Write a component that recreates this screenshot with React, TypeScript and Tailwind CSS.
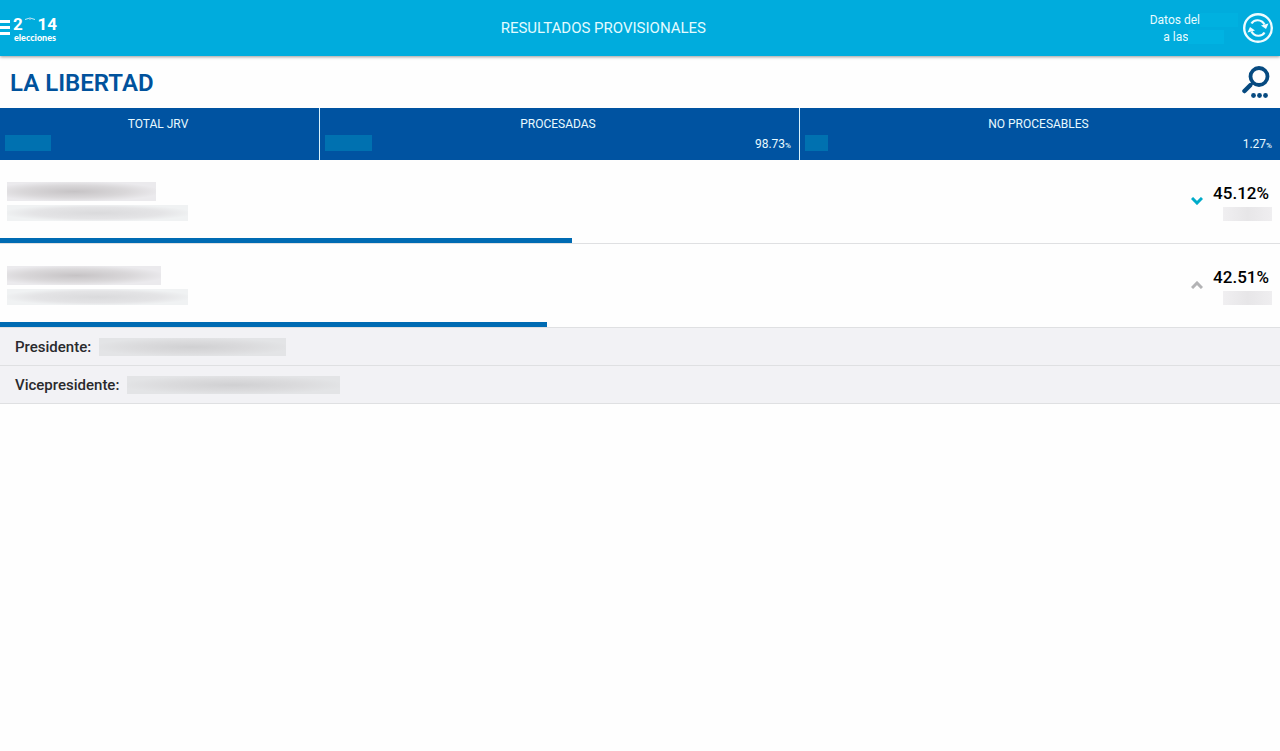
import { useState } from 'react';
import { clsx } from 'clsx';

interface Stat {
  label: string;
  blurWidth: string;
  percent?: string;
}

interface Candidate {
  label: string;
  blurWidth: string;
}

interface Party {
  id: string;
  percent: string;
  bar: number;
  nameBlur: string;
  detailBlur: string;
  candidates: Candidate[];
}

const STATS: Stat[] = [
  { label: 'TOTAL JRV', blurWidth: 'w-[46px]' },
  { label: 'PROCESADAS', blurWidth: 'w-[47px]', percent: '98.73' },
  { label: 'NO PROCESABLES', blurWidth: 'w-[23px]', percent: '1.27' },
];

const FORMULA: Candidate[] = [
  { label: 'Presidente:', blurWidth: 'w-[187px]' },
  { label: 'Vicepresidente:', blurWidth: 'w-[213px]' },
];

const PARTIES: Party[] = [
  { id: 'a', percent: '45.12', bar: 572 / 1280, nameBlur: 'w-[149px]', detailBlur: 'w-[181px]', candidates: FORMULA },
  { id: 'b', percent: '42.51', bar: 547 / 1280, nameBlur: 'w-[154px]', detailBlur: 'w-[181px]', candidates: FORMULA },
];

function Logo() {
  return (
    <div className="flex flex-col w-11 text-white">
      <div className="flex items-start justify-between font-bold text-[17px] leading-[18px]">
        <span>2</span>
        <svg viewBox="0 0 12 4" className="w-3 h-1 mt-[2px]" aria-hidden="true">
          <path d="M1 2.5 Q6 -0.5 11 2.5" fill="none" stroke="#c4ecf8" strokeWidth="1" />
          <path d="M4 1.5 h4 l-2 1.5 z" fill="#9fc4e6" />
        </svg>
        <span>14</span>
      </div>
      <span className="font-[Lato] font-black text-[9px] leading-[9px]">elecciones</span>
    </div>
  );
}

function MenuIcon() {
  return (
    <svg viewBox="0 0 10 16" className="w-[10px] h-4" fill="#fff" aria-hidden="true">
      <path d="M0 0h10v3H0zM0 6h10v3H0zM0 12h10v3H0z" />
    </svg>
  );
}

function RefreshIcon() {
  return (
    <svg viewBox="0 0 30 30" className="size-[30px]" fill="none" stroke="#eefcff" aria-hidden="true">
      <circle cx="15" cy="15" r="13.8" strokeWidth="2.4" />
      <path d="M8.5 10.5 C11 6 18.5 6 21.5 11.5" strokeWidth="2.2" />
      <path d="M21.5 19.5 C19 24 11.5 24 8.5 18.5" strokeWidth="2.2" />
      <path d="M18 12.5 L25.5 10.5 L23 16 Z" fill="#eefcff" stroke="none" />
      <path d="M12 17.5 L4.5 19.5 L7 14 Z" fill="#eefcff" stroke="none" />
    </svg>
  );
}

function SearchIcon() {
  return (
    <svg viewBox="0 0 28 34" className="w-7 h-[34px]" fill="none" stroke="#064a80" aria-hidden="true">
      <circle cx="17" cy="11.5" r="8.5" strokeWidth="3.8" />
      <path d="M11 17.5 L8 20.5" strokeWidth="3" />
      <path d="M8 20.5 L2.5 26" strokeWidth="4.5" strokeLinecap="round" />
      <g fill="#064a80" stroke="none">
        <circle cx="11.5" cy="30.5" r="2.4" />
        <circle cx="17.5" cy="30.5" r="2.4" />
        <circle cx="23.5" cy="30.5" r="2.4" />
      </g>
    </svg>
  );
}

function Chevron({ open }: { open: boolean }) {
  return (
    <svg viewBox="0 0 12 8" className="w-3 h-2" fill="none" strokeWidth="3" aria-hidden="true">
      {open ? (
        <path d="M1 7 L6 2 L11 7" stroke="#b3b3b5" />
      ) : (
        <path d="M1 1 L6 6 L11 1" stroke="#00abc9" />
      )}
    </svg>
  );
}

function PartyRow({ party, open, onToggle }: { party: Party; open: boolean; onToggle: () => void }) {
  return (
    <li>
      <button
        type="button"
        onClick={onToggle}
        aria-expanded={open}
        className="block w-full text-left border-b border-[#dfe0e2]"
      >
        <span className="flex items-start justify-between pt-[22px] h-[78px] pl-[7px] pr-2">
          <span className="flex flex-col gap-1">
            <span
              className={clsx(
                'block h-[19px] bg-[radial-gradient(ellipse_at_45%_50%,#c6c3c5,#d9d7d9_45%,#ebeaed_75%)]',
                party.nameBlur
              )}
            />
            <span
              className={clsx(
                'block h-4 bg-[radial-gradient(ellipse_at_50%_50%,#dadadc,#e4e4e6_50%,#f0f2f3_75%)]',
                party.detailBlur
              )}
            />
          </span>
          <span className="flex items-start gap-[10px]">
            <span className="pt-[15px]">
              <Chevron open={open} />
            </span>
            <span className="flex flex-col items-end gap-[3px]">
              <span className="font-medium text-[17px] leading-[22px] text-black pr-[3px]">{party.percent}%</span>
              <span className="block w-[49px] h-[14px] bg-gradient-to-r from-[#f0eff1] via-[#e7e6e8] to-[#efeef0]" />
            </span>
          </span>
        </span>
        <span className="block h-[5px] bg-[#006bb3]" style={{ width: `${party.bar * 100}%` }} />
      </button>
      {open && (
        <dl>
          {party.candidates.map(c => (
            <div key={c.label} className="flex items-center gap-2 h-[38px] px-[15px] bg-[#f2f2f5] border-b border-[#dfe0e2]">
              <dt className="font-medium text-[15px] leading-5 text-[#2a2a2d]">{c.label}</dt>
              <dd
                className={clsx(
                  'h-[18px] bg-[radial-gradient(ellipse_at_50%_50%,#d0d0d2,#dbdbdd_45%,#e3e4e6_75%)]',
                  c.blurWidth
                )}
              />
            </div>
          ))}
        </dl>
      )}
    </li>
  );
}

export default function App() {
  const [openId, setOpenId] = useState<string | null>('b');

  return (
    <div className="min-h-screen bg-[#fefefe] font-[Roboto,sans-serif]">
      <header className="flex items-center h-14 pr-[7px] bg-[#00acdd] text-white shadow-[0_1px_3px_rgba(0,0,0,0.4)]">
        <button type="button" aria-label="Menú" className="flex items-center gap-[3px]">
          <MenuIcon />
          <Logo />
        </button>
        <h1 className="flex-1 text-center text-[15px] leading-5 text-[#e2fbff]">RESULTADOS PROVISIONALES</h1>
        <div className="pt-px text-[12px] leading-[17px] text-[#e8fcff]">
          <p className="flex items-center justify-center">
            Datos del
            <span className="w-[38px] h-[14px] bg-[#00b1e0]" />
          </p>
          <p className="flex items-center justify-center">
            a las
            <span className="w-9 h-[14px] bg-[#00b3e2]" />
          </p>
        </div>
        <button type="button" aria-label="Actualizar" className="ml-[5px]">
          <RefreshIcon />
        </button>
      </header>

      <div className="flex items-center justify-between h-[52px] px-[10px]">
        <h2 className="pt-px font-semibold text-2xl text-[#00529c]">LA LIBERTAD</h2>
        <button type="button" aria-label="Buscar">
          <SearchIcon />
        </button>
      </div>

      {/* Resumen de actas */}
      <section className="grid grid-cols-[2fr_3fr_3fr] h-[52px] bg-[#0053a1] text-[#e8faff]">
        {STATS.map(stat => (
          <div key={stat.label} className="pt-2 pl-[5px] pr-2 border-r border-[#d9f2fb] last:border-r-0">
            <h3 className="text-center text-[12px] leading-4">{stat.label}</h3>
            <div className="flex items-start justify-between mt-[3px]">
              <span className={clsx('h-4 bg-[#0071b0]', stat.blurWidth)} />
              {stat.percent && (
                <span className="pt-px text-[12px] leading-4">
                  {stat.percent}
                  <span className="font-medium text-[8px]">%</span>
                </span>
              )}
            </div>
          </div>
        ))}
      </section>

      <ul>
        {PARTIES.map(party => (
          <PartyRow
            key={party.id}
            party={party}
            open={openId === party.id}
            onToggle={() => setOpenId(openId === party.id ? null : party.id)}
          />
        ))}
      </ul>
    </div>
  );
}
